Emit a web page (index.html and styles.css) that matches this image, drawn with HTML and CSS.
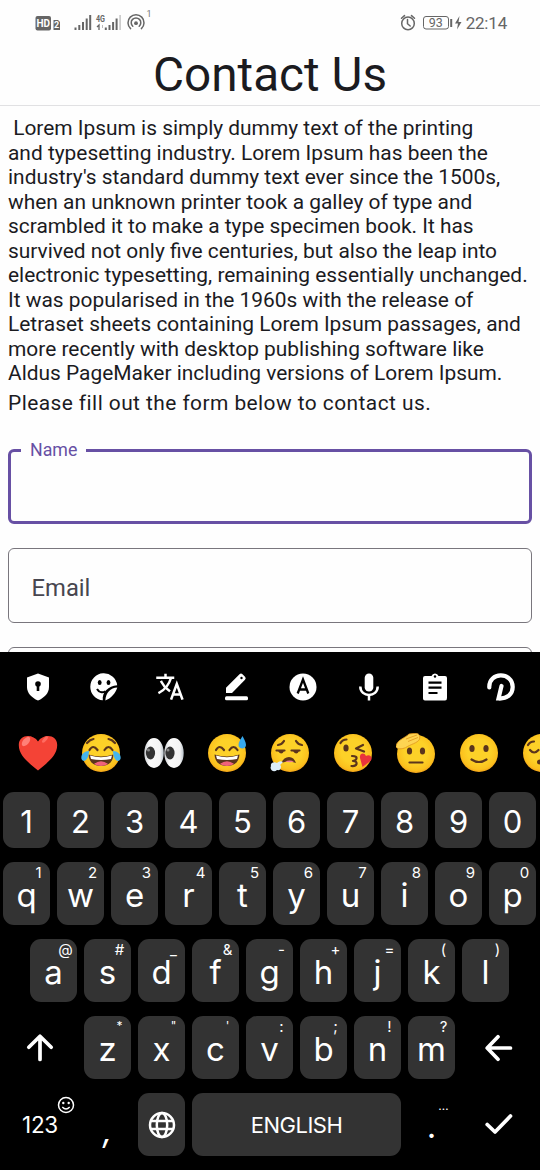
FILE: index.html
```html
<!DOCTYPE html>
<html lang="en">
<head>
<meta charset="utf-8">
<title>Contact Us</title>
<link rel="stylesheet" href="styles.css">
</head>
<body>
<svg class="defs" width="0" height="0">
  <defs>
    <radialGradient id="face" cx="50%" cy="45%" r="55%"><stop offset="0.55" stop-color="#fdd128"/><stop offset="0.88" stop-color="#fbc01d"/><stop offset="1" stop-color="#f2a21a"/></radialGradient>
    <linearGradient id="eyeball" x1="0" x2="1"><stop offset="0" stop-color="#c9ccd0"/><stop offset="0.25" stop-color="#fafafa"/><stop offset="0.8" stop-color="#f4f4f4"/><stop offset="1" stop-color="#b9c2ca"/></linearGradient>
  </defs>
</svg>
<div class="screen">
  <main class="page">
    <header class="status">
      <svg class="status-left" width="120" height="24" viewBox="34 8 120 24">
        <rect x="35.5" y="16" width="15.5" height="14.5" rx="2" fill="#666"/>
        <text x="43.2" y="27" class="s-hd">HD</text>
        <path d="M53.500 20h4.500l2 2v8h-6.500z" fill="#666"/><text x="56.700" y="28.300" class="s-two">2</text>
        <path d="M75.500 30v-2.500M79.300 30v-5M83 30v-8M86.700 30V18.500M90.200 30V15" stroke="#666" stroke-width="2" fill="none"/>
        <text x="96" y="21.500" class="s-4g" textLength="9" lengthAdjust="spacingAndGlyphs">4G</text>
        <path d="M99 30v-5l-2 2" stroke="#666" stroke-width="1.300" fill="none"/><path d="M102.500 25v3" stroke="#bbb" stroke-width="1"/>
        <path d="M105.800 30v-2.500M109.500 30v-5M113.100 30v-8M116.600 30V18.500" stroke="#666" stroke-width="2" fill="none"/><path d="M120.100 30V15" stroke="#c8c8c8" stroke-width="1.600"/>
        <g fill="none" stroke="#666" stroke-width="1.500" stroke-linecap="round"><path d="M130.600 28.600A8 8 0 1 1 141.400 28.600"/><path d="M132.800 26.300A4.800 4.800 0 1 1 139.200 26.300"/></g><circle cx="136" cy="23.200" r="1.900" fill="#666"/>
        <text x="146.500" y="17" class="s-one">1</text>
      </svg>
      <div class="status-right">
        <svg width="63" height="20" viewBox="398 13 63 20" fill="none" stroke="#666">
          <circle cx="407" cy="23.400" r="6.300" stroke-width="1.500"/><path d="M406.500 19.500v4.200l2.700 2.300M400.500 18.300l3-2.700M413.500 18.300l-3-2.700" stroke-width="1.500" stroke-linecap="round"/>
          <rect x="422.500" y="16.500" width="25" height="12.500" rx="2.500" stroke-width="1"/><path d="M450.200 19v8" stroke-width="2"/>
          <path d="M458.500 16l-4.500 7.500h3l-1 6 4.500-7.500h-3z" fill="#666" stroke="none"/>
          <text x="434.800" y="27.200" class="s-bat">93</text>
        </svg>
        <span class="clock">22:14</span>
      </div>
    </header>
    <h1 class="title">Contact Us</h1>
    <section class="content">
      <p class="intro">&nbsp;Lorem Ipsum is simply dummy text of the printing<br>and typesetting industry. Lorem Ipsum has been the<br>industry's standard dummy text ever since the 1500s,<br>when an unknown printer took a galley of type and<br>scrambled it to make a type specimen book. It has<br>survived not only five centuries, but also the leap into<br>electronic typesetting, remaining essentially unchanged.<br>It was popularised in the 1960s with the release of<br>Letraset sheets containing Lorem Ipsum passages, and<br>more recently with desktop publishing software like<br>Aldus PageMaker including versions of Lorem Ipsum.</p>
      <p class="prompt">Please fill out the form below to contact us.</p>
      <form class="form">
        <div class="field focused"><span class="float-label">Name</span></div>
        <div class="field"><span class="placeholder">Email</span></div>
        <div class="field"></div>
      </form>
    </section>
  </main>

  <section class="keyboard">
    <div class="tools">
      <svg viewBox="0 0 30 30"><path d="M15 1.500l11 4v9.500c0 6-4.500 10.800-11 13.500C8.500 25.800 4 21 4 15V5.500z" fill="#fff"/><circle cx="15" cy="12" r="2.800"/><path d="M13.700 13h2.600v6h-2.600z"/></svg>
      <svg viewBox="0 0 30 30"><path d="M28.200 13.200A13.500 13.500 0 1 0 13.800 28.300c-.8-8.500 5.500-14.300 14.400-15.100z" fill="#fff"/><path d="M28.300 15.500c-6.800.2-11.600 5.200-12 13 5.500-2 10.500-7.500 12-13z" fill="#fff"/><ellipse cx="10.700" cy="10.500" rx="1.900" ry="2.500"/><ellipse cx="19.500" cy="10.500" rx="1.900" ry="2.500"/><path d="M8 17c2 3.500 5.500 4 8.500 2.300" fill="none" stroke="#000" stroke-width="2"/></svg>
      <svg viewBox="0 0 30 30" fill="none" stroke="#fff" stroke-width="2.500" stroke-linecap="square"><path d="M2.500 5.800H18M10.500 3v2.500M15.800 6.500C13.800 13 10 17.500 4.500 20.500M6.500 10c2 4 4.500 6.500 7.500 8.500"/><path d="M16.500 26.500l5.300-14.500 5.300 14.500M18.800 22.500h6"/></svg>
      <svg viewBox="0 0 30 30"><path d="M5 21v-5.200L18.500 2.300q1.500-1.500 3 0l2.500 2.500q1.500 1.500 0 3L11 21z" fill="#fff"/><circle cx="20.500" cy="6" r="1.200"/><rect x="4" y="24.300" width="23" height="4" rx="1.500" fill="#fff"/></svg>
      <svg viewBox="0 0 30 30"><circle cx="15" cy="15" r="13.500" fill="#fff"/><path d="M9.700 21.500L15 7.500l5.300 14M11.500 17.500h7" fill="none" stroke="#000" stroke-width="2.300"/></svg>
      <svg viewBox="0 0 30 30"><rect x="10.700" y="1.500" width="8.600" height="18" rx="4.300" fill="#fff"/><path d="M6.300 14.500c0 11.300 17.400 11.300 17.400 0M15 23.500v5" fill="none" stroke="#fff" stroke-width="2.500"/></svg>
      <svg viewBox="0 0 30 30"><path d="M5 4h6.500a3.700 3.700 0 0 1 7 0H25q2 0 2 2v20q0 2.500-2 2.500H5q-2 0-2-2V6q0-2 2-2z" fill="#fff"/><circle cx="15" cy="4.500" r="1.200"/><path d="M8.500 10.700h13M8.500 15.700h13M8.500 21h9" stroke="#000" stroke-width="2.200"/></svg>
      <svg viewBox="0 0 30 30" fill="none" stroke="#fff" stroke-width="4.200" stroke-linecap="round"><path d="M3.300 15.500C2.500-.5 26.700-.5 26.700 15c0 7-5.500 12-14.200 11.500L15.500 14"/></svg>
    </div>
    <div class="emojis">
      <svg viewBox="0 0 40 40"><path d="M20 37.500C14 32 .8 24 .8 12 .8 1 15 .5 20 8.500 25 .5 39.200 1 39.200 12 39.200 24 26 32 20 37.500z" fill="#f44336"/><ellipse cx="8" cy="8.500" rx="3" ry="5.500" transform="rotate(40 8 8.500)" fill="#ff8178"/><ellipse cx="27" cy="6.500" rx="1.700" ry="4" transform="rotate(40 27 6.500)" fill="#ff6b60"/></svg>
      <svg viewBox="0 0 40 40"><circle cx="20" cy="20" r="19" fill="url(#face)"/><path d="M8.500 17q3.500-6 8 0M23.500 17q4-6 8 0M6 10q3-3.500 6.500-4M34 10q-3-3.500-6.500-4" class="ink"/><path d="M7.500 21.500q12.500 4 25 0C32 29.500 27 33 20 33S8 29.500 7.500 21.500z" fill="#5b351c"/><path d="M9 22.500q11 3.500 22 0l-1 3.500q-10 2-20 0z" fill="#fff"/><path d="M13 31q7-5.500 14 0-7 4-14 0z" fill="#f0627a"/><path d="M8 18C3 18-.5 22 .5 26c2 4 7 2 7.500-8zM32 18c5 0 8.500 4 7.500 8-2 4-7 2-7.500-8z" fill="#45b5ee"/></svg>
      <svg viewBox="0 0 40 40"><ellipse cx="10" cy="20" rx="9.700" ry="15" fill="url(#eyeball)"/><ellipse cx="30" cy="20" rx="9.700" ry="15" fill="url(#eyeball)"/><ellipse cx="6.500" cy="20" rx="4.600" ry="6.500" fill="#333"/><ellipse cx="26" cy="20" rx="4.600" ry="6.500" fill="#333"/><circle cx="4.500" cy="17" r="1.500" fill="#888"/><circle cx="24" cy="17" r="1.500" fill="#888"/></svg>
      <svg viewBox="0 0 40 40"><circle cx="20" cy="20" r="19" fill="url(#face)"/><path d="M9 17q3.500-6 8 0M22.500 17q4-6 8 0" class="ink"/><path d="M7.500 21.500q12.500 4 25 0C32 29.500 27 33 20 33S8 29.500 7.500 21.500z" fill="#5b351c"/><path d="M9 22.500q11 3.500 22 0l-1 3.500q-10 2-20 0z" fill="#fff"/><path d="M13 31q7-5.500 14 0-7 4-14 0z" fill="#f0627a"/><path d="M35.500 3c-2 3.500-4 6-4 9 0 4.500 7.500 4.500 7.500 0 0-3-2-6-3.500-9z" fill="#36aaf0"/></svg>
      <svg viewBox="0 0 40 40"><circle cx="20" cy="20" r="19" fill="url(#face)"/><path d="M8 12q4-.5 6-4M32 12q-4-.5-6-4M6.500 17.500h8M21.500 17.500h8" class="ink"/><path d="M8 18q3.500 5 6 0zM23 18q3.500 5 6 0z" fill="#5b351c"/><path d="M11 30q3-6 8-6t7 6q-7-3-15 0z" fill="#5b351c"/><path d="M15 28.500q5-2 9 0-4 1.500-9 0z" fill="#f48095"/><path d="M13 29c-3-2-5 0-6 1-3-2-7 0-6 3-2 4 3 7 6 4 4 1 5-4 3-5z" fill="#dceefa"/></svg>
      <svg viewBox="0 0 40 40"><circle cx="20" cy="20" r="19" fill="url(#face)"/><ellipse cx="13" cy="15" rx="2.600" ry="3.600" fill="#5b351c"/><path d="M7.500 10q2-3.500 6-3.500M30 12l-7 3.500 8 3M19 23q6 0 4 3.500-1 1-3 1.500 4 0 3.500 3-1 2.500-5 2" class="ink"/><path d="M29.500 34l-2.500-9c-1-5 4.500-6 6-2 4-2.500 7.500 2 4.500 5z" fill="#e9343c"/></svg>
      <svg viewBox="0 0 40 40"><circle cx="20" cy="21" r="19" fill="url(#face)"/><ellipse cx="13.500" cy="18" rx="2.600" ry="3.600" fill="#5b351c"/><ellipse cx="26.500" cy="18" rx="2.600" ry="3.600" fill="#5b351c"/><path d="M13.500 29.500h13" class="ink"/><path d="M0 13c1-6 9-8 13-12l7-.8c4 .8 4 3 3.500 6-2 4-9 5-14 8.500C6 16 1 17-.5 13z" fill="#fdd452" stroke="#df941d" stroke-width=".8"/><path d="M10 6l11-4M12 8.500l10-4" stroke="#df941d" stroke-width=".8"/></svg>
      <svg viewBox="0 0 40 40"><circle cx="20" cy="20" r="19" fill="url(#face)"/><ellipse cx="13" cy="15.500" rx="2.600" ry="3.600" fill="#5b351c"/><ellipse cx="27" cy="15.500" rx="2.600" ry="3.600" fill="#5b351c"/><path d="M12.500 26.500q7.500 5 15 0" class="ink"/></svg>
      <svg viewBox="0 0 40 40"><circle cx="20" cy="20" r="19" fill="url(#face)"/><path d="M6 12q2-3.500 6-3.500M8 17q4 5 8.500 0" class="ink"/><ellipse cx="18" cy="29" rx="3" ry="2.500" fill="#5b351c"/></svg>
    </div>
    <div class="rows">
      <div class="row digits"><div class="key">1</div><div class="key">2</div><div class="key">3</div><div class="key">4</div><div class="key">5</div><div class="key">6</div><div class="key">7</div><div class="key">8</div><div class="key">9</div><div class="key">0</div></div>
      <div class="row"><div class="key">q<i>1</i></div><div class="key">w<i>2</i></div><div class="key">e<i>3</i></div><div class="key">r<i>4</i></div><div class="key">t<i>5</i></div><div class="key">y<i>6</i></div><div class="key">u<i>7</i></div><div class="key">i<i>8</i></div><div class="key">o<i>9</i></div><div class="key">p<i>0</i></div></div>
      <div class="row home"><div class="key">a<i>@</i></div><div class="key">s<i>#</i></div><div class="key">d<i>_</i></div><div class="key">f<i>&amp;</i></div><div class="key">g<i>-</i></div><div class="key">h<i>+</i></div><div class="key">j<i>=</i></div><div class="key">k<i>(</i></div><div class="key">l<i>)</i></div></div>
      <div class="row">
        <div class="key plain wide"><svg width="30" height="30" viewBox="0 0 30 30" class="line"><path d="M15 26.500V4M3.800 14.200L15 3.200l11.200 11"/></svg></div>
        <div class="key">z<i class="small">*</i></div><div class="key">x<i class="small">"</i></div><div class="key">c<i class="small">'</i></div><div class="key">v<i>:</i></div><div class="key">b<i>;</i></div><div class="key">n<i>!</i></div><div class="key">m<i>?</i></div>
        <div class="key plain wide"><svg width="30" height="30" viewBox="0 0 30 30" class="line"><path d="M26.500 15H4M14 3.800L3.200 15 14 26.200"/></svg></div>
      </div>
      <div class="row bottom">
        <div class="key plain wide mode">123<svg class="smile" width="18" height="18" viewBox="0 0 18 18"><circle cx="9" cy="9" r="7.500" fill="none" stroke="#fff" stroke-width="1.500"/><circle cx="6.300" cy="7" r="1.200" fill="#fff"/><circle cx="11.700" cy="7" r="1.200" fill="#fff"/><path d="M5.300 11q3.700 4 7.400 0" fill="none" stroke="#fff" stroke-width="1.300"/></svg></div>
        <div class="key plain comma">,</div>
        <div class="key globe"><svg width="28" height="28" viewBox="0 0 28 28" fill="none" stroke="#fff" stroke-width="2.500"><circle cx="14" cy="14" r="12"/><ellipse cx="14" cy="14" rx="5.200" ry="12"/><path d="M3 10h22M3 18h22"/></svg></div>
        <div class="key space">ENGLISH</div>
        <div class="key plain period">.<i class="small">…</i></div>
        <div class="key plain wide enter"><svg width="30" height="30" viewBox="0 0 30 30" class="line"><path d="M3.200 15.500l7.800 7.500L26.500 7"/></svg></div>
      </div>
    </div>
  </section>
</div>
</body>
</html>
```
FILE: styles.css
```css
* { box-sizing: border-box; }
body { margin: 0; background: #fefefe; font-family: Roboto, sans-serif; color: #1b1b1f; }
.defs { position: absolute; }
.screen { width: 540px; height: 1170px; display: flex; flex-direction: column; overflow: hidden; }
.page { height: 652px; flex: none; overflow: hidden; }

.status { height: 45px; display: flex; justify-content: space-between; padding: 8px 33px 0 34px; color: #666; }
.status-right { display: flex; gap: 4px; padding-top: 5px; }
.clock { font-size: 17px; line-height: 20px; letter-spacing: -0.2px; }
.s-hd, .s-two { font: 700 9px Roboto, sans-serif; fill: #fff; text-anchor: middle; }
.s-hd { font-size: 10px; }
.s-4g { font: 700 8.5px Roboto, sans-serif; fill: #666; }
.s-one { font: 9px Roboto, sans-serif; fill: #777; }
.s-bat { font: 12.5px Roboto, sans-serif; fill: #666; stroke: none; text-anchor: middle; }

.title { height: 61px; margin: 0; border-bottom: 1px solid #e1e1e3; font-size: 47.7px; line-height: 60px; font-weight: 400; text-align: center; }
.content { padding: 10px 8px 0; }
.intro { margin: 0; font-size: 20.92px; line-height: 24.5px; white-space: nowrap; }
.prompt { margin: 4px 0 0; font-size: 20.92px; line-height: 26px; letter-spacing: 0.44px; white-space: nowrap; }
.form { display: flex; flex-direction: column; gap: 24px; padding-top: 33px; }
.field { height: 75px; flex: none; display: flex; align-items: center; padding: 5px 22.5px 0; border: 1.5px solid #79767d; border-radius: 6px; position: relative; }
.focused { border: 3px solid #6750a4; }
.float-label { position: absolute; top: -13px; left: 10px; padding: 0 9px; background: #fefefe; color: #6750a4; font-size: 17.8px; line-height: 22px; }
.placeholder { font-size: 23.8px; color: #47464f; }

.keyboard { height: 518px; flex: none; background: #000; color: #fff; font-family: Inter, sans-serif; }
.tools { display: flex; justify-content: space-between; padding: 20px 24px 0 23px; }
.tools svg { width: 30px; height: 30px; flex: none; }
.emojis { display: flex; gap: 23px; padding: 31px 0 0 18px; overflow: hidden; }
.emojis svg { width: 40px; height: 40px; flex: none; }
.ink { fill: none; stroke: #5b351c; stroke-width: 2.2; stroke-linecap: round; stroke-linejoin: round; }
.rows { display: flex; flex-direction: column; gap: 14px; padding: 19px 1px 0 0; }
.row { display: flex; justify-content: center; gap: 7px; height: 63px; }
.key { position: relative; width: 47px; flex: none; display: flex; align-items: center; justify-content: center; padding-top: 3px; border-radius: 11px; background: #333; font-size: 33px; }
.digits { height: 56px; }
.digits .key { font-size: 31px; padding-top: 2px; }
.key i { position: absolute; top: 2px; left: 20px; width: 31px; text-align: center; font-style: normal; font-size: 15px; line-height: 18px; }
.key .small { font-size: 12px; line-height: 16px; }
.plain { background: none; }
.wide { width: 74px; }
.wide .line { margin: -2px 1px 0 0; }
.line { fill: none; stroke: #fff; stroke-width: 3.7; stroke-linecap: round; stroke-linejoin: round; }
.bottom .key { padding-top: 0; }
.bottom .mode { font-size: 22.5px; letter-spacing: -0.3px; }
.smile { position: absolute; left: 54px; top: 3px; }
.bottom .comma { padding-top: 10px; font-style: italic; }
.bottom .period { padding-top: 3px; }
.period .small { top: 5px; }
.space { width: 209px; }
.bottom .space { font-size: 22px; letter-spacing: -0.5px; }
```
